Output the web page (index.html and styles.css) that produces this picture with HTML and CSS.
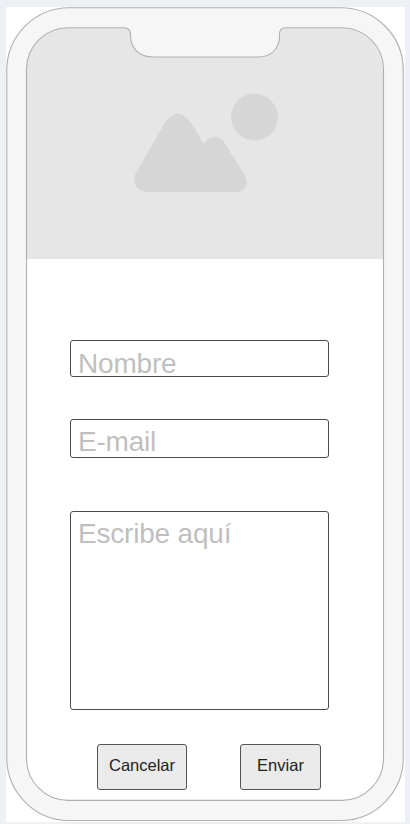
FILE: index.html
```html
<!DOCTYPE html>
<html lang="es">
<head>
<meta charset="utf-8">
<title>Contacto</title>
<link rel="stylesheet" href="styles.css">
</head>
<body>
<main class="canvas">
  <svg class="frame" viewBox="0 0 399 815" aria-hidden="true">
    <path class="bezel" fill-rule="evenodd" d="M63 .7H335A62.500 62.500 0 0 1 397.300 63V750A62.500 63 0 0 1 335 813.500H63A62.500 63 0 0 1 .8 750V63A62.500 62.500 0 0 1 63 .7ZM62 20.800A41.600 41.600 0 0 0 20.500 62V751A41.600 42 0 0 0 62 793.400H336A41.600 42 0 0 0 377.500 751V62A41.600 41.600 0 0 0 336 20.800H280Q273.500 20.800 273.500 27C274 41 266 50 252 50H147C133 50 124.500 41 124.500 28Q124.500 20.800 118 20.800Z"/>
  </svg>
  <section class="screen">
    <div class="hero">
      <svg class="picture" viewBox="0 0 146 100" aria-hidden="true">
        <circle cx="120.500" cy="23.200" r="23.400"/>
        <path d="M2 79L29 32Q43 8 58 30L69.700 50Q80 36 90 48L110.500 80.500Q116.500 95 104 98H17Q1 98 .2 86Q.2 82 2 79Z"/>
      </svg>
    </div>
    <form class="form">
      <div class="field name">Nombre</div>
      <div class="field email">E-mail</div>
      <div class="field message">Escribe aquí</div>
      <div class="actions">
        <button class="button cancel" type="button">Cancelar</button>
        <button class="button send" type="button">Enviar</button>
      </div>
    </form>
  </section>
</main>
</body>
</html>
```
FILE: styles.css
```css
* { box-sizing: border-box; }

body {
  margin: 0;
  height: 824px;
  padding: 7px 5px 2px 6px;
  overflow: hidden;
  background: #edf1f6;
  font-family: "Liberation Sans", Arial, sans-serif;
}

.canvas {
  position: relative;
  height: 815px;
  padding: 21px 21px 21px 20px;
  background: #fff;
}

.frame {
  position: absolute;
  top: 0;
  left: 0;
  width: 399px;
  height: 815px;
  pointer-events: none;
}

.bezel {
  fill: #f6f6f6;
  stroke: #b0b0b0;
  stroke-width: 1.1;
}

.screen { height: 773px; }

.hero {
  height: 231px;
  margin-right: 1px;
  padding: 66px 0 0 108px;
  border-radius: 42px 42px 0 0;
  background: #e6e6e6;
}

.picture {
  display: block;
  width: 146px;
  height: 100px;
  overflow: visible;
  fill: #d6d6d6;
}

.form {
  display: flex;
  flex-direction: column;
  padding: 81px 54px 0 44px;
}

.field {
  width: 259px;
  padding-left: 7px;
  border: 1px solid #4a4a4a;
  border-radius: 3px;
  color: #bfbfbf;
  font-size: 28px;
  letter-spacing: -0.2px;
  line-height: 32px;
}

.name { height: 37px; padding-top: 7px; }
.email { height: 39px; margin-top: 42px; padding-top: 6px; }
.message { height: 199px; margin-top: 53px; padding-top: 6px; }

.actions {
  display: flex;
  gap: 53px;
  margin: 34px 0 0 27px;
}

.button {
  height: 46px;
  padding: 0 0 3px;
  border: 1px solid #555;
  border-radius: 3px;
  background: #eaeaea;
  color: #222;
  font-family: inherit;
  font-size: 16.500px;
}

.cancel { width: 90px; }
.send { width: 81px; }
```
